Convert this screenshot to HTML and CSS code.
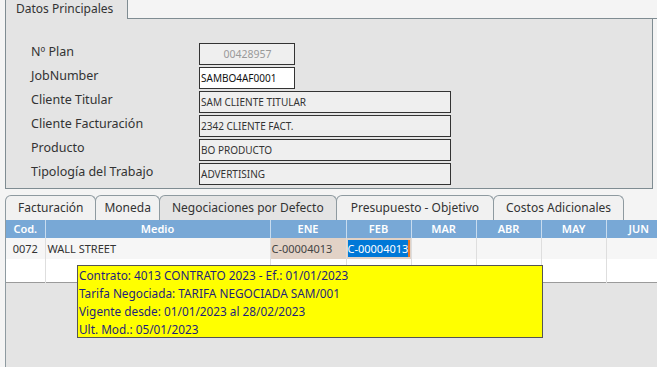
FILE: index.html
```html
<!DOCTYPE html>
<html lang="es">
<head>
  <meta charset="UTF-8">
  <title>Datos Principales</title>
  <link rel="stylesheet" href="styles.css">
</head>
<body>
  <div class="screen">
    <div class="main-tabs">
      <div class="main-tab">Datos Principales</div>
      <div class="main-tabs-fill"></div>
    </div>
    <div class="panel">
      <div class="form">
        <label>Nº Plan</label>
        <div class="field short center">00428957</div>

        <label>JobNumber</label>
        <div class="field short editable">SAMBO4AF0001</div>

        <label>Cliente Titular</label>
        <div class="field">SAM CLIENTE TITULAR</div>

        <label>Cliente Facturación</label>
        <div class="field">2342 CLIENTE FACT.</div>

        <label>Producto</label>
        <div class="field">BO PRODUCTO</div>

        <label>Tipología del Trabajo</label>
        <div class="field">ADVERTISING</div>
      </div>
    </div>

    <div class="sub">
      <div class="sub-tabs">
        <div class="sub-tab">Facturación</div>
        <div class="sub-tab narrow">Moneda</div>
        <div class="sub-tab active">Negociaciones por Defecto</div>
        <div class="sub-tab wide">Presupuesto - Objetivo</div>
        <div class="sub-tab">Costos Adicionales</div>
      </div>
      <div class="grid-area">
        <table class="grid">
          <colgroup>
            <col class="c-cod"><col class="c-medio"><col class="c-ene">
            <col class="c-mes"><col class="c-mes"><col class="c-mes"><col class="c-mes"><col class="c-mes">
          </colgroup>
          <thead>
            <tr>
              <th>Cod.</th><th>Medio</th><th>ENE</th><th>FEB</th>
              <th>MAR</th><th>ABR</th><th>MAY</th><th>JUN</th>
            </tr>
          </thead>
          <tbody>
            <tr class="data-row">
              <td class="cod">0072</td>
              <td>WALL STREET</td>
              <td class="neg">C-00004013</td>
              <td class="neg"><span class="selected">C-00004013</span></td>
              <td></td><td></td><td></td><td></td>
            </tr>
            <tr class="empty-row">
              <td></td><td></td><td></td><td></td><td></td><td></td><td></td><td></td>
            </tr>
          </tbody>
        </table>
        <div class="tooltip">
          <div>Contrato: 4013 CONTRATO 2023 - Ef.: 01/01/2023</div>
          <div>Tarifa Negociada: TARIFA NEGOCIADA SAM/001</div>
          <div>Vigente desde: 01/01/2023 al 28/02/2023</div>
          <div>Ult. Mod.: 05/01/2023</div>
        </div>
      </div>
    </div>
  </div>
</body>
</html>
```

FILE: styles.css
```css
:root {
  --page-bg: #f4f4f4;
  --panel-bg: #e4e4e4;
  --border: #7f8c92;
  --tab-border: #8e9aa0;
  --head-blue: #78a8d6;
  --cell-tan: #e2d2c6;
  --tip-yellow: #ffff00;
  --font-family: 'Noto Sans', 'Open Sans', sans-serif;
}
* { box-sizing: border-box; margin: 0; padding: 0; }
body {
  width: 657px;
  height: 367px;
  overflow: hidden;
  background: var(--page-bg);
  font-family: var(--font-family);
  color: #333;
}
.screen {
  padding-left: 5px;
  height: 367px;
  display: flex;
  flex-direction: column;
}

/* pestaña superior */
.main-tabs {
  display: flex;
  height: 19px;
}
.main-tab {
  width: 123px;
  border-left: 1px solid var(--border);
  border-right: 1px solid var(--border);
  background: var(--panel-bg);
  font-size: 12px;
  line-height: 17px;
  padding-left: 10px;
}
.main-tabs-fill {
  flex: 1;
  border-bottom: 1px solid var(--border);
}
.panel {
  width: 648px;
  height: 170px;
  background: var(--panel-bg);
  border: 1px solid var(--border);
  border-top: none;
}
.form {
  display: grid;
  grid-template-columns: 168px auto;
  grid-auto-rows: 22px;
  row-gap: 2px;
  padding: 24px 0 0 25px;
}
.form label {
  font-size: 12.5px;
  line-height: 16px;
  padding-top: 1px;
}
.field {
  width: 252px;
  border: 1px solid #333;
  background: #efefef;
  font-size: 10px;
  line-height: 20px;
  padding-left: 1px;
  white-space: nowrap;
}
.field.short { width: 96px; }
.field.editable { background: #ffffff; color: #111; }
.field.center { text-align: center; color: #999; font-size: 10.5px; }

/* pestañas inferiores */
.sub {
  flex: 1;
  margin-top: 6px;
  display: flex;
  flex-direction: column;
}
.sub-tabs {
  display: flex;
  height: 25px;
}
.sub-tab {
  height: 25px;
  padding: 0 12px;
  margin-right: -1px;
  font-size: 12px;
  line-height: 24px;
  background: #f1f1f1;
  border: 1px solid var(--tab-border);
  border-bottom: none;
  border-radius: 6px 6px 0 0;
  white-space: nowrap;
}
.sub-tab.narrow { padding: 0 8px; }
.sub-tab.wide { padding: 0 14px; }
.sub-tab.active { background: var(--panel-bg); }
.grid-area {
  flex: 1;
  position: relative;
  background: var(--panel-bg);
  border-left: 1px solid var(--tab-border);
  overflow: hidden;
}
.grid {
  border-collapse: collapse;
  table-layout: fixed;
  width: 665px;
  font-size: 11px;
  border-bottom: 1px solid #9a9a9a;
}
.c-cod { width: 39px; }
.c-medio { width: 225px; }
.c-ene { width: 76px; }
.c-mes { width: 65px; }
.grid th {
  height: 18px;
  background: var(--head-blue);
  color: #ffffff;
  font-weight: 600;
  text-align: center;
  border-left: 1px solid #c8dcef;
  line-height: 16px;
}
.grid th:first-child { border-left: none; }
.grid td {
  background: #ffffff;
  border-left: 1px solid #dedede;
  white-space: nowrap;
  overflow: hidden;
  padding: 0 2px;
}
.grid td:first-child { border-left: none; }
.data-row td {
  height: 21px;
  background: #f6f6f6;
  color: #333;
}
.data-row td.cod { text-align: center; }
.data-row td.neg {
  background: var(--cell-tan);
  color: #444;
  padding-left: 1px;
}
.selected {
  background: #0078d7;
  color: #ffffff;
  padding: 1px 0;
  border-right: 2px solid #e87722;
}
.empty-row td { height: 23px; }

.tooltip {
  position: absolute;
  left: 71px;
  top: 45px;
  width: 466px;
  height: 73px;
  background: var(--tip-yellow);
  border: 1px solid #555555;
  color: #1f1f7a;
  font-size: 11.8px;
  line-height: 18px;
  padding: 0 1px;
}
```
